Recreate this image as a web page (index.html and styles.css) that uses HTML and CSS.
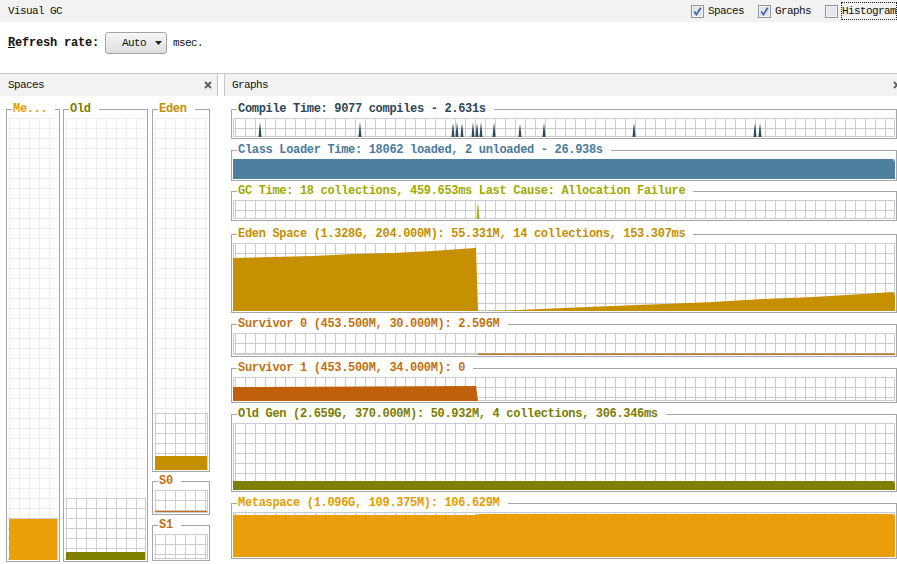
FILE: index.html
```html
<!DOCTYPE html>
<html>
<head>
<meta charset="utf-8">
<title>Visual GC</title>
<link rel="stylesheet" href="styles.css">
</head>
<body>
<div class="app">
  <div class="topbar">
    <span class="apptitle">Visual GC</span>
    <div class="toggles">
      <label class="tog">
        <svg viewBox="0 0 13 13"><rect x="0.5" y="0.5" width="12" height="12" fill="#f3f4f6" stroke="#8e949e"/><rect x="2" y="2" width="9" height="9" fill="#dfe3ea"/><path d="M3.2 6.6 L5.4 9.6 L9.8 2.8" fill="none" stroke="#3f62b0" stroke-width="1.7"/></svg>
        <span>Spaces</span>
      </label>
      <label class="tog">
        <svg viewBox="0 0 13 13"><rect x="0.5" y="0.5" width="12" height="12" fill="#f3f4f6" stroke="#8e949e"/><rect x="2" y="2" width="9" height="9" fill="#dfe3ea"/><path d="M3.2 6.6 L5.4 9.6 L9.8 2.8" fill="none" stroke="#3f62b0" stroke-width="1.7"/></svg>
        <span>Graphs</span>
      </label>
      <label class="tog">
        <svg viewBox="0 0 13 13"><rect x="0.5" y="0.5" width="12" height="12" fill="#f3f4f6" stroke="#8e949e"/><rect x="2" y="2" width="9" height="9" fill="#e4e6ea"/></svg>
        <span class="focus">Histogram</span>
      </label>
    </div>
  </div>

  <div class="controls">
    <span class="lbl"><u>R</u>efresh rate:</span>
    <button class="combo"><span>Auto</span><svg viewBox="0 0 7 4" class="arrow"><path d="M0 0 L7 0 L3.5 4 Z" fill="#222"/></svg></button>
    <span class="unit">msec.</span>
  </div>

  <div class="main">
    <section class="panel spaces">
      <header class="phead phead-left">
        <span>Spaces</span>
        <svg class="close" viewBox="0 0 8 8"><path d="M1 1 L7 7 M7 1 L1 7" stroke="#5a5a5a" stroke-width="1.8"/></svg>
      </header>
      <div class="spaces-body">
        <div class="sbox w-meta h-tall">
          <div class="bhead"><span class="t c-meta">Me...</span></div>
          <div class="bbody">
            <div class="splot">
              <div class="free"></div>
              <div class="used u-meta"><div class="sfill f-meta fh-meta"></div></div>
            </div>
          </div>
        </div>
        <div class="sbox w-old h-tall">
          <div class="bhead"><span class="t c-old">Old</span></div>
          <div class="bbody">
            <div class="splot">
              <div class="free"></div>
              <div class="used u-old"><div class="sfill f-old fh-old"></div></div>
            </div>
          </div>
        </div>
        <div class="eden-col">
          <div class="sbox h-eden">
            <div class="bhead"><span class="t c-eden">Eden</span></div>
            <div class="bbody">
              <div class="splot">
                <div class="free"></div>
                <div class="used u-eden"><div class="sfill f-eden fh-eden"></div></div>
              </div>
            </div>
          </div>
          <div class="sbox h-s0 mt3">
            <div class="bhead"><span class="t c-surv">S0</span></div>
            <div class="bbody">
              <div class="splot">
                <div class="used grow"><div class="sfill f-s0 fh-s0"></div></div>
              </div>
            </div>
          </div>
          <div class="sbox h-s1 mt4">
            <div class="bhead"><span class="t c-surv">S1</span></div>
            <div class="bbody">
              <div class="splot">
                <div class="used grow"></div>
              </div>
            </div>
          </div>
        </div>
      </div>
    </section>

    <section class="panel graphs">
      <header class="phead phead-right">
        <span>Graphs</span>
        <svg class="close" viewBox="0 0 8 8"><path d="M1 1 L7 7 M7 1 L1 7" stroke="#5a5a5a" stroke-width="1.8"/></svg>
      </header>
      <div class="graphs-body">
        <div class="gbox">
          <div class="bhead"><span class="t c-compile">Compile Time: 9077 compiles - 2.631s</span></div>
          <div class="bbody">
            <div class="gplot ph19">
              <svg viewBox="0 0 662 19" preserveAspectRatio="none">
                <g fill="#2f4c5b">
                  <path d="M25.5 19 L26.3 10 L27 4 L27.7 10 L28.5 19 Z"/>
                  <path d="M125.5 19 L126.3 10 L127 4 L127.7 10 L128.5 19 Z"/>
                  <path d="M218.5 19 L219.3 10 L220 5 L220.7 10 L221.5 19 Z"/>
                  <path d="M222.5 19 L223.3 10 L224 4 L224.7 10 L225.5 19 Z"/>
                  <path d="M227.5 19 L228.3 10 L229 5 L229.7 10 L230.5 19 Z"/>
                  <path d="M238.5 19 L239.3 10 L240 4 L240.7 10 L241.5 19 Z"/>
                  <path d="M242.5 19 L243.3 10 L244 5 L244.7 10 L245.5 19 Z"/>
                  <path d="M246.5 19 L247.3 10 L248 4 L248.7 10 L249.5 19 Z"/>
                  <path d="M259.5 19 L260.3 10 L261 4 L261.7 10 L262.5 19 Z"/>
                  <path d="M285.5 19 L286.3 11 L287 6 L287.7 11 L288.5 19 Z"/>
                  <path d="M309.5 19 L310.3 10 L311 5 L311.7 10 L312.5 19 Z"/>
                  <path d="M399.5 19 L400.3 10 L401 5 L401.7 10 L402.5 19 Z"/>
                  <path d="M520.5 19 L521.3 10 L522 5 L522.7 10 L523.5 19 Z"/>
                  <path d="M525.5 19 L526.3 10 L527 5 L527.7 10 L528.5 19 Z"/>
                </g>
              </svg>
            </div>
          </div>
        </div>

        <div class="gbox mt5">
          <div class="bhead"><span class="t c-class">Class Loader Time: 18062 loaded, 2 unloaded - 26.938s</span></div>
          <div class="bbody">
            <div class="gplot ph20">
              <svg viewBox="0 0 662 20" preserveAspectRatio="none"><path d="M0 0 L660 0 L661 3 L662 0 L662 20 L0 20 Z" fill="#4d809f"/></svg>
            </div>
          </div>
        </div>

        <div class="gbox mt4">
          <div class="bhead"><span class="t c-gc">GC Time: 18 collections, 459.653ms Last Cause: Allocation Failure</span></div>
          <div class="bbody">
            <div class="gplot ph19">
              <svg viewBox="0 0 662 19" preserveAspectRatio="none"><path d="M243.5 19 L244.3 9 L245 2 L245.7 9 L246.5 19 Z" fill="#a6b000"/></svg>
            </div>
          </div>
        </div>

        <div class="gbox mt7">
          <div class="bhead"><span class="t c-eden">Eden Space (1.328G, 204.000M): 55.331M, 14 collections, 153.307ms</span></div>
          <div class="bbody">
            <div class="gplot ph68">
              <svg viewBox="0 0 662 68" preserveAspectRatio="none"><path d="M0 68 L0 15 L40 14 L80 13 L120 11 L160 10 L200 8 L242 5 L243 5 L245 68 L285 67 L330 65 L380 63 L430 61 L480 59 L530 56 L580 54 L630 51 L660 49 L661 50 L662 53 L662 68 Z" fill="#c79000"/></svg>
            </div>
          </div>
        </div>

        <div class="gbox mt5">
          <div class="bhead"><span class="t c-surv">Survivor 0 (453.500M, 30.000M): 2.596M</span></div>
          <div class="bbody">
            <div class="gplot ph22">
              <svg viewBox="0 0 662 22" preserveAspectRatio="none"><rect x="245" y="20.5" width="417" height="1.5" fill="#b8701a"/></svg>
            </div>
          </div>
        </div>

        <div class="gbox mt5">
          <div class="bhead"><span class="t c-surv">Survivor 1 (453.500M, 34.000M): 0</span></div>
          <div class="bbody">
            <div class="gplot ph24">
              <svg viewBox="0 0 662 24" preserveAspectRatio="none"><path d="M0 24 L0 10 L242 9 L243 9 L245 24 Z" fill="#c0600a"/></svg>
            </div>
          </div>
        </div>

        <div class="gbox mt5">
          <div class="bhead"><span class="t c-old">Old Gen (2.659G, 370.000M): 50.932M, 4 collections, 306.346ms</span></div>
          <div class="bbody">
            <div class="gplot ph67">
              <svg viewBox="0 0 662 67" preserveAspectRatio="none"><path d="M0 67 L0 58 L660 58 L662 60 L662 67 Z" fill="#808000"/></svg>
            </div>
          </div>
        </div>

        <div class="gbox mt5">
          <div class="bhead"><span class="t c-meta">Metaspace (1.096G, 109.375M): 106.629M</span></div>
          <div class="bbody">
            <div class="gplot ph45">
              <svg viewBox="0 0 662 45" preserveAspectRatio="none"><path d="M0 45 L0 3 L243 3 L245 2 L660 2 L662 4 L662 45 Z" fill="#eb9e0b"/></svg>
            </div>
          </div>
        </div>
      </div>
    </section>
  </div>
</div>
</body>
</html>
```

FILE: styles.css
```css
* {
  box-sizing: border-box;
  margin: 0;
  padding: 0;
}

html,
body {
  width: 897px;
  height: 564px;
  overflow: hidden;
  background: #ffffff;
}

body {
  font-family: "Liberation Mono", "DejaVu Sans Mono", monospace;
  font-size: 11px;
  letter-spacing: -0.6px;
  color: #111111;
}

.app {
  width: 897px;
  height: 564px;
  display: flex;
  flex-direction: column;
  overflow: hidden;
}

/* top bar */
.topbar {
  flex: none;
  height: 22px;
  background: #f2f2f2;
  display: flex;
  align-items: center;
  line-height: 12px;
}

.apptitle {
  flex: 1;
  padding-left: 8px;
}

.toggles {
  flex: 0 0 206px;
  display: flex;
  align-items: center;
  gap: 14px;
  white-space: nowrap;
}

.tog {
  display: flex;
  align-items: center;
  gap: 4px;
}

.tog svg {
  flex: none;
  width: 13px;
  height: 13px;
  display: block;
}

.focus {
  border: 1px dotted #222222;
  padding: 2px 0 2px 0;
  margin-left: -1px;
}

/* refresh controls */
.controls {
  flex: none;
  height: 51px;
  padding: 10px 0 0 8px;
  display: flex;
  align-items: flex-start;
  gap: 6px;
}

.lbl {
  font-weight: bold;
  font-size: 12px;
  letter-spacing: -0.2px;
  line-height: 22px;
}

.combo {
  width: 62px;
  height: 22px;
  border: 1px solid #a4a4a4;
  border-radius: 3px;
  background: linear-gradient(#f7f7f7, #dedede);
  font-family: inherit;
  font-size: 11px;
  letter-spacing: -0.6px;
  color: #111111;
  display: flex;
  align-items: center;
  padding-left: 16px;
  gap: 9px;
}

.arrow {
  width: 7px;
  height: 4px;
  display: block;
}

.unit {
  line-height: 22px;
}

/* main area */
.main {
  flex: 1;
  display: flex;
  gap: 6px;
  border-top: 1px solid #c6c6c6;
  overflow: hidden;
}

.panel {
  flex: none;
  display: flex;
  flex-direction: column;
}

.spaces {
  width: 218px;
}

.graphs {
  width: 682px;
}

.phead {
  flex: none;
  height: 22px;
  background: #f2f2f2;
  display: flex;
  align-items: center;
  justify-content: space-between;
  line-height: 12px;
}

.phead-left {
  padding: 0 5px 0 8px;
  border-right: 1px solid #c6c6c6;
}

.phead-right {
  padding: 0 5px 0 7px;
  border-left: 1px solid #c6c6c6;
}

.close {
  width: 8px;
  height: 8px;
  display: block;
}

/* titled boxes */
.bhead {
  flex: none;
  display: flex;
  height: 12px;
  line-height: 12px;
}

.bhead::before {
  content: "";
  flex: 0 0 5px;
  height: 6px;
  margin-top: 6px;
  border-top: 1px solid #a6a6a6;
  border-left: 1px solid #a6a6a6;
}

.bhead::after {
  content: "";
  flex: 1;
  height: 6px;
  margin-top: 6px;
  border-top: 1px solid #a6a6a6;
  border-right: 1px solid #a6a6a6;
}

.t {
  font-weight: bold;
  font-size: 12px;
  letter-spacing: -0.32px;
  padding: 0 8px 0 1px;
  white-space: nowrap;
}

.bbody {
  border: 1px solid #a6a6a6;
  border-top: 0;
  padding: 3px 1px 1px 1px;
}

/* title colours */
.c-compile { color: #2e4756; }
.c-class { color: #4a7b9a; }
.c-gc { color: #a2aa00; }
.c-eden { color: #c48e00; }
.c-surv { color: #bf7214; }
.c-old { color: #7c7c00; }
.c-meta { color: #e29e00; }

/* spaces panel */
.spaces-body {
  flex: 1;
  padding: 7px 0 0 6px;
  display: flex;
  align-items: flex-start;
  gap: 3px;
}

.sbox {
  display: flex;
  flex-direction: column;
}

.sbox .bbody {
  flex: 1;
  display: flex;
}

.w-meta { width: 54px; }
.w-old { width: 85px; margin-right: 1px; }
.h-tall { height: 459px; }

.eden-col {
  width: 58px;
  display: flex;
  flex-direction: column;
}

.h-eden { height: 369px; }
.h-s0 { height: 40px; }
.h-s1 { height: 42px; }
.mt3 { margin-top: 3px; }
.mt4 { margin-top: 4px; }
.mt5 { margin-top: 5px; }
.mt7 { margin-top: 7px; }

.splot {
  flex: 1;
  display: flex;
  flex-direction: column;
}

.free {
  flex: 1;
  background-image:
    linear-gradient(90deg, #ededed 1px, transparent 1px),
    linear-gradient(#ededed 1px, transparent 1px);
  background-size: 10px 10px;
  background-position: 1px 0;
}

.used {
  display: flex;
  flex-direction: column;
  justify-content: flex-end;
  background-image:
    linear-gradient(90deg, #cdcdcd 1px, transparent 1px),
    linear-gradient(#cdcdcd 1px, transparent 1px);
  background-size: 10px 10px;
  background-position: 1px 0;
  box-shadow: inset -1px -1px 0 #cdcdcd;
}

.grow { flex: 1; }

.u-meta { height: 42px; }
.u-old { height: 62px; }
.u-eden { height: 57px; }

.sfill {
  margin: 0 1px;
}

.f-meta { background: #eba00a; }
.f-old { background: #808000; }
.f-eden { background: #c68f00; }
.f-s0 { background: #c07018; }

.fh-meta { height: 41px; }
.fh-old { height: 8px; }
.fh-eden { height: 14px; }
.fh-s0 { height: 1px; margin-bottom: 1px; }

/* graphs panel */
.graphs-body {
  flex: 1;
  padding: 7px 9px 0 7px;
  display: flex;
  flex-direction: column;
}

.gbox {
  flex: none;
  width: 666px;
  display: flex;
  flex-direction: column;
}

.gplot {
  background-image:
    linear-gradient(90deg, #cbcbd3 1px, transparent 1px),
    linear-gradient(#cbcbd3 1px, transparent 1px);
  background-size: 10px 10px;
  background-position: 2px 0;
  box-shadow: inset -1px -1px 0 #cbcbd3, inset 1px 0 0 #cbcbd3;
}

.gplot svg {
  display: block;
  width: 100%;
  height: 100%;
}

.ph19 { height: 19px; }
.ph20 { height: 20px; }
.ph22 { height: 22px; }
.ph24 { height: 24px; }
.ph45 { height: 45px; }
.ph67 { height: 67px; }
.ph68 { height: 68px; }
```
